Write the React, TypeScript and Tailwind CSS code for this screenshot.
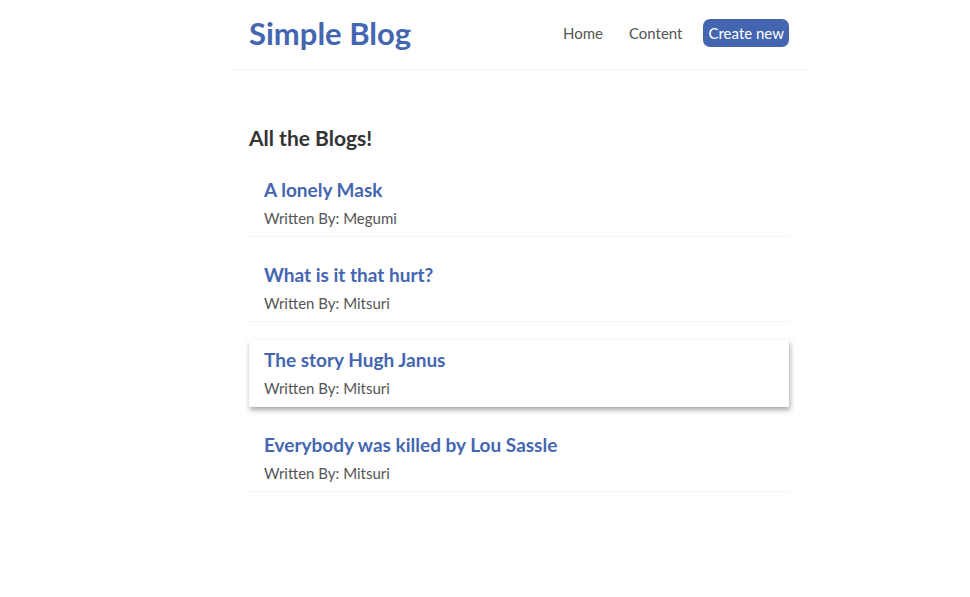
const blogs = [
  { id: 1, title: "A lonely Mask", author: "Megumi" },
  { id: 2, title: "What is it that hurt?", author: "Mitsuri" },
  { id: 3, title: "The story Hugh Janus", author: "Mitsuri", hover: true },
  { id: 4, title: "Everybody was killed by Lou Sassle", author: "Mitsuri" },
]

const App = () => {
  return (
    <div className="min-h-screen bg-white font-['Lato',sans-serif] text-[#333]">
      <div className="ml-[232px] w-[576px]">
        {/* Navbar */}
        <nav className="flex items-center h-[70px] pl-[17px] pr-[19px] border-b border-[#f2f2f2]">
          <h1 className="text-[31px] font-bold text-[#4466b1] leading-none pb-[3px]">Simple Blog</h1>
          <div className="ml-auto flex items-center text-[15px] leading-[20px] text-[#555] pb-[4px]">
            <a href="/" className="px-[6px] py-[4px]">Home</a>
            <a href="/content" className="ml-[14px] px-[6px] py-[4px]">Content</a>
            <a href="/create" className="ml-[15px] px-[5px] py-[4px] rounded-[7px] bg-[#4466b1] text-white">
              Create new
            </a>
          </div>
        </nav>

        {/* Content */}
        <div className="pl-[17px] pr-[19px] pt-[57px]">
          <h2 className="text-[21px] font-bold text-[#333] leading-none">All the Blogs!</h2>
          <div className="mt-[22px] flex flex-col gap-[18px]">
            {blogs.map((blog) => (
              <div
                key={blog.id}
                className={
                  blog.hover
                    ? "px-[15px] pt-[8px] h-[67px] border-b border-[#fafafa] shadow-[1px_3px_5px_rgba(0,0,0,0.35)]"
                    : "px-[15px] pt-[8px] h-[67px] border-b border-[#f4f4f4]"
                }
              >
                <h3 className="text-[19px] font-bold text-[#4466b1] leading-[24px]">{blog.title}</h3>
                <p className="mt-[6px] text-[15px] text-[#555] leading-[20px]">Written By: {blog.author}</p>
              </div>
            ))}
          </div>
        </div>
      </div>
    </div>
  )
}

export default App
